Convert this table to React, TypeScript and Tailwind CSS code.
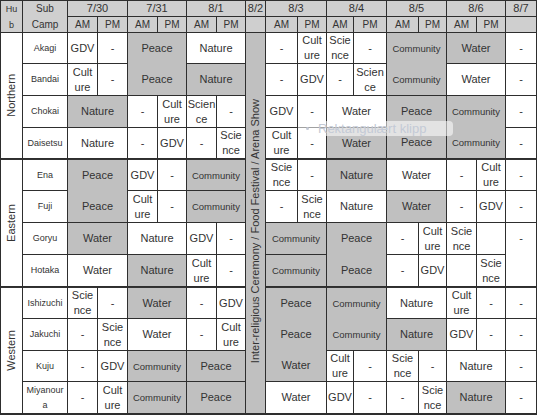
import { Fragment } from "react";

type Cell = {
  t: string[]; // stacked texts (more than one when the cell is merged over rows)
  c: number;
  r: number;
  g: boolean;
};

const w = (t: string | string[], c = 1, r = 1): Cell => ({
  t: Array.isArray(t) ? t : [t],
  c,
  r,
  g: false,
});
const g = (t: string | string[], c = 1, r = 1): Cell => ({
  t: Array.isArray(t) ? t : [t],
  c,
  r,
  g: true,
});

const colSpan: Record<number, string> = { 1: "", 2: "col-span-2" };
const rowSpan: Record<number, string> = {
  1: "",
  2: "row-span-2",
  3: "row-span-3",
  4: "row-span-4",
  12: "row-span-12",
};

type Row = { name: string; top?: boolean; hub?: string; cells: Cell[] };

const rows: Row[] = [
  {
    name: "Akagi",
    hub: "Northern",
    cells: [
      w("GDV"),
      w("-"),
      g(["Peace", "Peace"], 2, 2),
      w("Nature", 2),
      w("-"),
      w("Cult\nure"),
      w("Scie\nnce"),
      w("-"),
      g(["Community", "Community"], 2, 2),
      g("Water", 2),
      w("-"),
    ],
  },
  {
    name: "Bandai",
    cells: [
      w("Cult\nure"),
      w("-"),
      g("Nature", 2),
      w("-"),
      w("GDV"),
      w("-"),
      w("Scien\nce"),
      w("Water", 2),
      w("-"),
    ],
  },
  {
    name: "Chokai",
    cells: [
      g("Nature", 2),
      w("-"),
      w("Cult\nure"),
      w("Scien\nce"),
      w("-"),
      w("GDV"),
      w("-"),
      w("Water", 2),
      g(["Peace", "Peace"], 2, 2),
      g(["Community", "Community"], 2, 2),
      w("-"),
    ],
  },
  {
    name: "Daisetsu",
    cells: [
      w("Nature", 2),
      w("-"),
      w("GDV"),
      w("-"),
      w("Scie\nnce"),
      w("Cult\nure"),
      w("-"),
      g("Water", 2),
      w("-"),
    ],
  },
  {
    name: "Ena",
    hub: "Eastern",
    top: true,
    cells: [
      g(["Peace", "Peace"], 2, 2),
      w("GDV"),
      w("-"),
      g("Community", 2),
      w("Scie\nnce"),
      w("-"),
      g("Nature", 2),
      w("Water", 2),
      w("-"),
      w("Cult\nure"),
      w("-"),
    ],
  },
  {
    name: "Fuji",
    cells: [
      w("Cult\nure"),
      w("-"),
      g("Community", 2),
      w("-"),
      w("Scie\nnce"),
      w("Nature", 2),
      g("Water", 2),
      w("-"),
      w("GDV"),
      w("-"),
    ],
  },
  {
    name: "Goryu",
    cells: [
      g("Water", 2),
      w("Nature", 2),
      w("GDV"),
      w("-"),
      g("Community", 2),
      g(["Peace", "Peace"], 2, 2),
      w("-"),
      w("Cult\nure"),
      w("Scie\nnce"),
      w(""),
      w(["-", ""], 1, 2),
    ],
  },
  {
    name: "Hotaka",
    cells: [
      w("Water", 2),
      g("Nature", 2),
      w("Cult\nure"),
      w("-"),
      g("Community", 2),
      w("-"),
      w("GDV"),
      w(""),
      w("Scie\nnce"),
    ],
  },
  {
    name: "Ishizuchi",
    hub: "Western",
    top: true,
    cells: [
      w("Scie\nnce"),
      w("-"),
      g("Water", 2),
      w("-"),
      w("GDV"),
      g(["Peace", "Peace", "Water"], 2, 3),
      g(["Community", "Community"], 2, 2),
      w("Nature", 2),
      w("Cult\nure"),
      w("-"),
      w("-"),
    ],
  },
  {
    name: "Jakuchi",
    cells: [
      w("-"),
      w("Scie\nnce"),
      w("Water", 2),
      w("-"),
      w("Cult\nure"),
      g("Nature", 2),
      w("GDV"),
      w("-"),
      w("-"),
    ],
  },
  {
    name: "Kuju",
    cells: [
      w("-"),
      w("GDV"),
      g("Community", 2),
      g("Peace", 2),
      w("Cult\nure"),
      w("-"),
      w("Scie\nnce"),
      w("-"),
      w("Nature", 2),
      w("-"),
    ],
  },
  {
    name: "Miyanour\na",
    cells: [
      w("-"),
      w("Cult\nure"),
      g("Community", 2),
      g("Peace", 2),
      w("Water", 2),
      w("GDV"),
      w("-"),
      w("-"),
      w("Scie\nnce"),
      g("Nature", 2),
      w("-"),
    ],
  },
];

const dates = [
  { d: "7/30", c: 2 },
  { d: "7/31", c: 2 },
  { d: "8/1", c: 2 },
  { d: "8/2", c: 1 },
  { d: "8/3", c: 2 },
  { d: "8/4", c: 2 },
  { d: "8/5", c: 2 },
  { d: "8/6", c: 2 },
  { d: "8/7", c: 1 },
];

function Lines({ text }: { text: string }) {
  const parts = text.split("\n");
  return (
    <>
      {parts.map((p, i) => (
        <Fragment key={i}>
          {p}
          {i < parts.length - 1 && <br />}
        </Fragment>
      ))}
    </>
  );
}

function DataCell({ cell, top }: { cell: Cell; top?: boolean }) {
  return (
    <div
      className={[
        "flex flex-col",
        colSpan[cell.c],
        rowSpan[cell.r],
        cell.g ? "bg-[#c0c0c0]" : "bg-white",
        top ? "border-t border-[#333]" : "",
      ].join(" ")}
    >
      {cell.t.map((t, i) => (
        <div
          key={i}
          className={[
            "flex flex-1 items-center justify-center text-center leading-[15px]",
            t === "Community" ? "text-[9.5px]" : "text-[11px]",
          ].join(" ")}
        >
          <Lines text={t} />
        </div>
      ))}
    </div>
  );
}

export default function App() {
  return (
    <div className="relative h-[419px] w-[538px] bg-white font-['Liberation_Sans',Arial,sans-serif] text-[#333]">
      <div className="grid grid-cols-[21px_44px_29px_29px_29px_28px_29px_28px_19px_31px_28px_26px_32px_31px_27px_29px_28px_30px] grid-rows-[15px_15px_30px_31px_31px_30px_31px_31px_31px_31px_31px_31px_30px_31px] gap-px bg-[#2e2e2e] p-px pb-[2px] w-fit">
        {/* header */}
        <div className="row-span-2 flex items-center justify-center bg-[#cfcfcf] text-center text-[9px] leading-[16px]">
          Hu
          <br />b
        </div>
        <div className="row-span-2 flex items-center justify-center bg-[#cfcfcf] text-center text-[10px] leading-[16px]">
          Sub
          <br />
          Camp
        </div>
        {dates.map((x) => (
          <div
            key={x.d}
            className={[
              "flex items-center justify-center bg-[#cfcfcf] text-[11px]",
              colSpan[x.c],
            ].join(" ")}
          >
            {x.d}
          </div>
        ))}
        {dates.map((x) =>
          x.c === 2 ? (
            <Fragment key={x.d}>
              <div className="flex items-center justify-center bg-[#cfcfcf] text-[10px]">
                AM
              </div>
              <div className="flex items-center justify-center bg-[#cfcfcf] text-[10px]">
                PM
              </div>
            </Fragment>
          ) : (
            <div key={x.d} className="bg-[#cfcfcf]" />
          )
        )}

        {/* body */}
        {rows.map((row, ri) => (
          <Fragment key={row.name}>
            {row.hub && (
              <div
                className={[
                  "row-span-4 flex items-center justify-center bg-white",
                  row.top ? "border-t border-[#333]" : "",
                ].join(" ")}
              >
                <span className="rotate-180 text-[11px] [writing-mode:vertical-rl]">
                  {row.hub}
                </span>
              </div>
            )}
            <div
              className={[
                "flex items-center justify-center bg-white text-center text-[9px] leading-[15px]",
                row.top ? "border-t border-[#333]" : "",
              ].join(" ")}
            >
              <Lines text={row.name} />
            </div>
            {row.cells.map((cell, ci) => (
              <Fragment key={ci}>
                <DataCell cell={cell} top={row.top} />
                {ri === 0 && ci === 3 && (
                  <div className="row-span-12 flex items-center justify-center bg-[#c0c0c0] pt-4">
                    <span className="rotate-180 whitespace-nowrap text-[11px] [writing-mode:vertical-rl]">
                      Inter-religious Ceremony / Food Festival / Arena Show
                    </span>
                  </div>
                )}
              </Fragment>
            ))}
          </Fragment>
        ))}
      </div>

      {/* snipping tool hint floating over the sheet */}
      <div className="absolute left-[298px] top-[121px] flex h-[15px] w-[155px] items-center gap-[9px] rounded-sm bg-white/55 pl-[8px] text-[13px] text-[#c4cad6]">
        <span className="h-[3px] w-[3px] rounded-full bg-[#c4cad6]" />
        Rektangulært klipp
      </div>
    </div>
  );
}
